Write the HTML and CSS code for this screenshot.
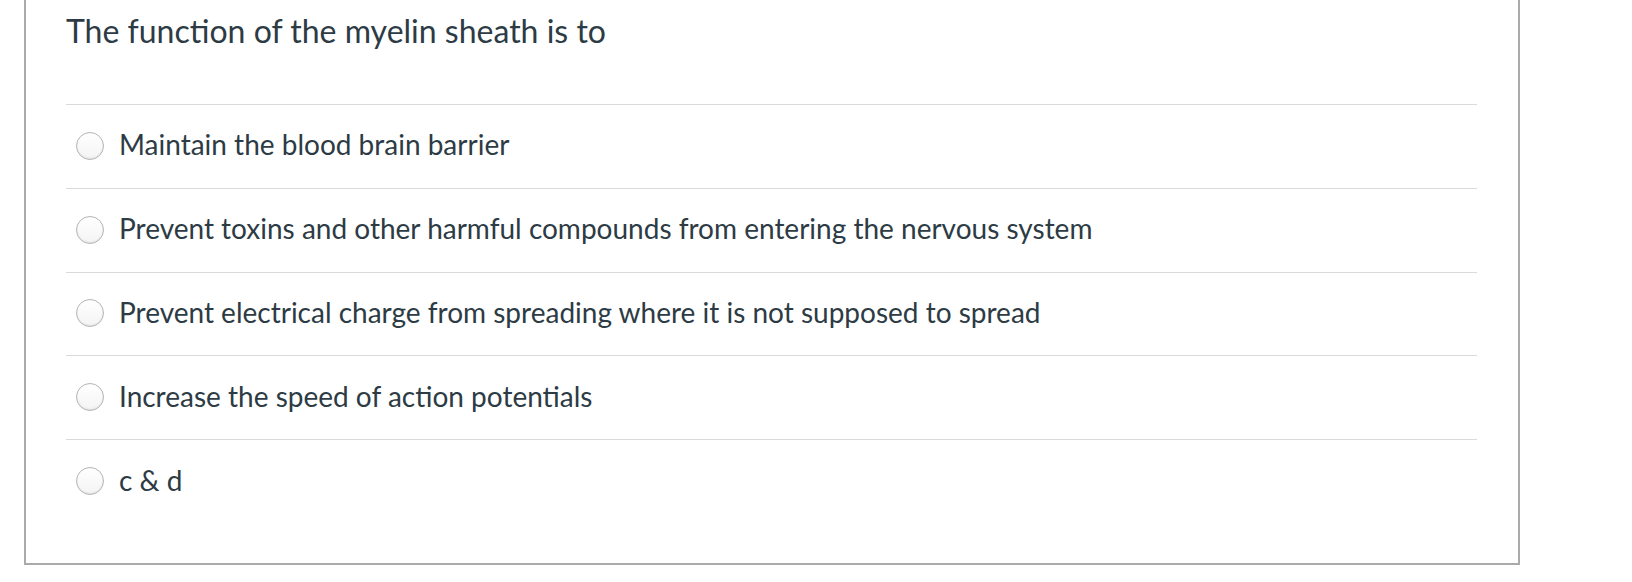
FILE: index.html
```html
<!DOCTYPE html>
<html>
<head>
<meta charset="utf-8">
<link rel="stylesheet" href="styles.css">
</head>
<body>
<div class="card">
  <div class="question">The function of the myelin sheath is to</div>
  <div class="answers">
    <div class="answer"><span class="radio"></span><span class="label">Maintain the blood brain barrier</span></div>
    <div class="answer"><span class="radio"></span><span class="label">Prevent toxins and other harmful compounds from entering the nervous system</span></div>
    <div class="answer"><span class="radio"></span><span class="label">Prevent electrical charge from spreading where it is not supposed to spread</span></div>
    <div class="answer"><span class="radio"></span><span class="label">Increase the speed of action potentials</span></div>
    <div class="answer"><span class="radio"></span><span class="label">c &amp; d</span></div>
  </div>
</div>
</body>
</html>
```
FILE: styles.css
```css
html, body {
  margin: 0;
  padding: 0;
  background: #fff;
}
body {
  font-family: Lato, "Open Sans", sans-serif;
  color: #2d3b45;
}
.card {
  margin-left: 24px;
  width: 1496px;
  box-sizing: border-box;
  height: 565px;
  border: 2px solid #aaaaaa;
  border-top: none;
  padding: 0 41px 0 40px;
}
.question {
  font-size: 32px;
  line-height: 38px;
  padding-top: 12px;
  height: 104px;
  box-sizing: border-box;
}
.answer {
  display: flex;
  align-items: center;
  height: 83.8px;
  border-top: 1px solid #d8dbde;
  box-sizing: border-box;
}
.radio {
  width: 28px;
  height: 28px;
  box-sizing: border-box;
  border-radius: 50%;
  border: 1px solid #b5b5b5;
  background: linear-gradient(#ffffff, #f4f4f4);
  box-shadow: inset 0 -1px 2px rgba(0,0,0,0.08);
  margin-left: 10px;
  margin-right: 15px;
  margin-bottom: 1px;
  flex: none;
}
.label {
  font-size: 28px;
  line-height: 34px;
  padding-bottom: 4px;
}
```
